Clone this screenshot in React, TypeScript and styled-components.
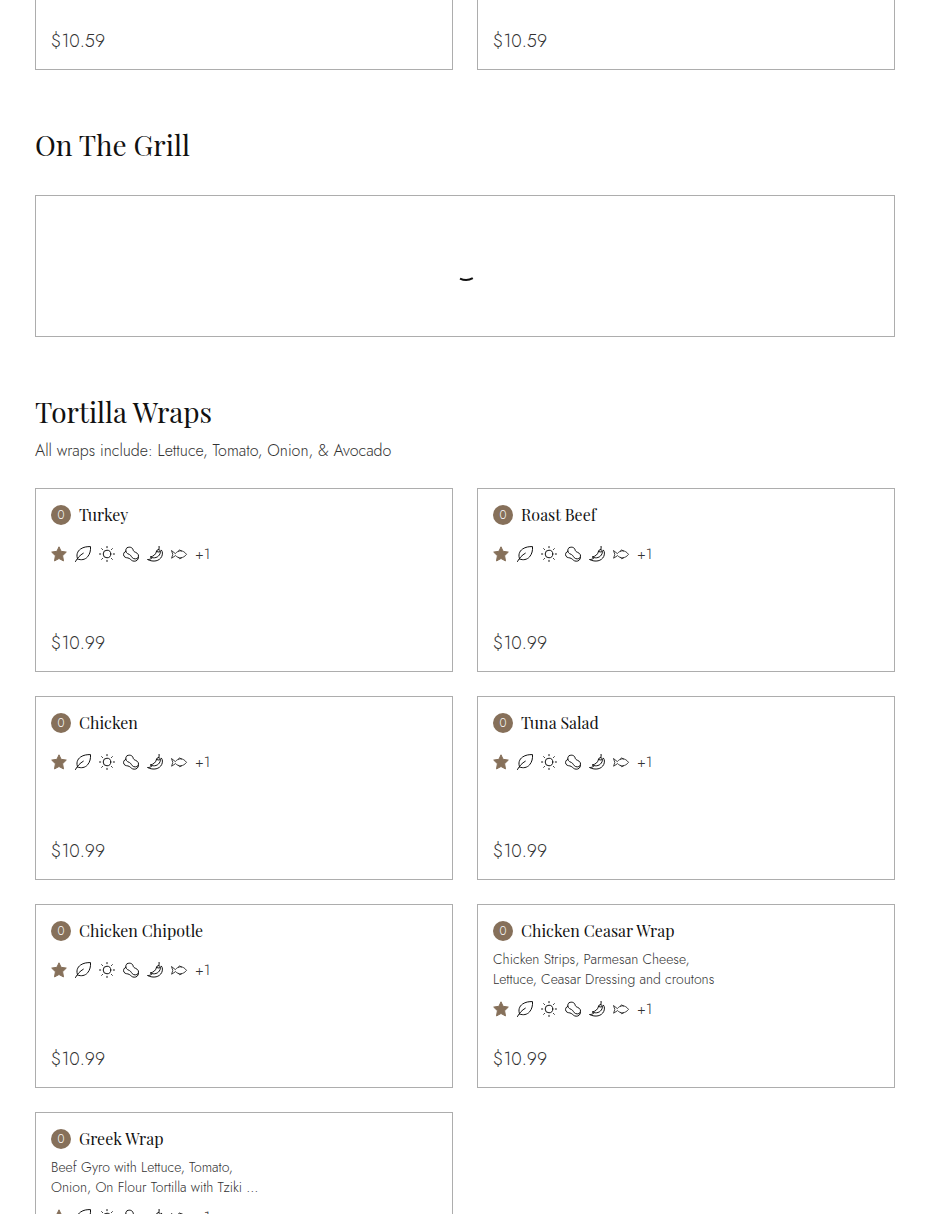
import React from "react";
import styled, { createGlobalStyle } from "styled-components";

const serif = `"Playfair Display", "Liberation Serif", serif`;
const sans = `"Futura PT", Jost, Lato, "Liberation Sans", sans-serif`;

const GlobalStyle = createGlobalStyle`
  *, *::before, *::after { box-sizing: border-box; }
  body {
    margin: 0;
    background: #fff;
    color: #111;
    font-family: ${sans};
    font-weight: 300;
  }
`;

const Page = styled.main`
  padding: 0 35px 40px;
`;

const Section = styled.section`
  padding-top: 56px;
`;

const Heading = styled.h2`
  margin: 0;
  font-family: ${serif};
  font-size: 28px;
  font-weight: 400;
  line-height: 38px;
  color: #111;
`;

const Intro = styled.p`
  margin: 8px 0 0;
  font-size: 16px;
  line-height: 24px;
  color: #333;
`;

const Grid = styled.div<{ $top?: number }>`
  display: grid;
  grid-template-columns: repeat(2, minmax(0, 1fr));
  gap: 24px;
  margin-top: ${({ $top = 0 }) => $top}px;
`;

const Card = styled.article`
  display: flex;
  flex-direction: column;
  min-height: 184px;
  padding: 15px;
  border: 1px solid #adadad;
`;

const CardEnd = styled(Card)`
  min-height: 70px;
  border-top: 0;
`;

const CardHeader = styled.header`
  display: flex;
  align-items: center;
  gap: 8px;
  height: 22px;
`;

const Badge = styled.span`
  display: flex;
  align-items: center;
  justify-content: center;
  width: 20px;
  height: 20px;
  border-radius: 50%;
  background: #86705a;
  color: #fff;
  font-size: 12px;
  line-height: 20px;
`;

const ItemName = styled.h3`
  margin: 0;
  font-family: ${serif};
  font-size: 16px;
  font-weight: 400;
  line-height: 22px;
  color: #111;
`;

const Description = styled.p`
  width: 240px;
  margin: 7px 0 -8px;
  font-size: 14px;
  line-height: 20px;
  color: #333;
  white-space: pre-line;
`;

const Tags = styled.div`
  display: flex;
  align-items: center;
  gap: 8px;
  height: 16px;
  margin-top: 20px;
  font-size: 15px;
  line-height: 16px;
  color: #333;

  svg {
    flex: none;
    width: 16px;
    height: 16px;
    overflow: visible;
  }
`;

const Price = styled.p`
  margin: auto 0 0;
  padding-bottom: 2px;
  font-size: 18px;
  line-height: 22px;
  color: #333;
`;

const LoadingBox = styled.div`
  display: flex;
  align-items: center;
  justify-content: center;
  height: 142px;
  margin-top: 31px;
  border: 1px solid #adadad;
`;

const Line = styled.svg<{ $weight?: number }>`
  fill: none;
  stroke: #111;
  stroke-width: ${({ $weight = 1 }) => $weight};
  stroke-linecap: round;
  stroke-linejoin: round;
`;

const StarIcon = () => (
  <svg viewBox="0 0 16 16" aria-hidden="true">
    <path
      d="M8 .8l2.100 4.500 5.200.8-3.700 3.600.9 5.200L8 12.500l-4.500 2.400.9-5.200L.7 6.100l5.200-.8z"
      fill="#86705a"
      stroke="#86705a"
      strokeLinejoin="round"
    />
  </svg>
);

const LeafIcon = () => (
  <Line viewBox="0 0 16 16" aria-hidden="true">
    <path d="M2.700 13C.9 9.300 2.300 5.200 5.600 3 8.500 1 12 .5 15.500 .6c.3 3.600-.5 7.400-2.900 10.200-2.500 2.900-6.400 3.700-9.900 2.200z" />
    <path d="M.5 15.500c1.700-3.400 4.400-6.300 7.800-8.300" />
  </Line>
);

const SunIcon = () => (
  <Line viewBox="0 0 16 16" aria-hidden="true">
    <circle cx="8" cy="8" r="3.800" />
    <path d="M8 .5v1.200M8 14.300v1.200M.5 8h1.200M14.300 8h1.200M2.700 2.700l.8.8M12.500 12.500l.8.8M13.300 2.700l-.8.8M3.500 12.500l-.8.8" />
  </Line>
);

const PeanutIcon = () => (
  <Line viewBox="0 0 16 16" aria-hidden="true">
    <path d="M4.200 1.700C6.400.4 9.500 1.300 10.100 3.800c.3 1.500 1.200 2 2.600 2.600 2.500 1 3.500 3.300 2.400 5.100-1.200 1.800-4.200 1.900-5.900.1-1.100-1.200-1.300-2.400-2.800-3.100C4.900 7.800 4 7.500 3.300 6.400 2.300 4.700 2.600 2.700 4.200 1.700z" />
    <path d="M2.900 5.300C.8 5.800-.1 8.300 1 10.200c1.200 1.900 3.600 1.300 5.200 2.200 1.700 1 2.500 2.700 5 2.800 2.200.1 4.100-1.300 4.300-3.700" />
  </Line>
);

const ChiliIcon = () => (
  <Line viewBox="0 0 16 16" aria-hidden="true">
    <path d="M12.100 .4c.2 1.300.1 2.200-.4 3.300" />
    <path d="M9.600 5.200c.2-1.500 2.100-2.100 3.200-1.100.8.8.8 2.300.2 3.700-1.600 3.600-5.600 5.100-9.900 3.200 3.300-.6 5.900-2.500 6.500-5.800z" />
    <path d="M9.800 5.400l1.300.6 1.800-.3" />
    <path d="M14.500 4.200c1.300 1.500 1.200 4.200.2 6.300-2.100 4.500-8.200 6-14.200 3 1.700.1 3-.3 4.100-1.200" />
  </Line>
);

const FishIcon = () => (
  <Line viewBox="0 0 16 16" aria-hidden="true" $weight={0.8}>
    <path d="M4.600 7.300C7 4 12.300 3.600 15.500 8.400c-3.200 4.300-8.300 4.200-10.900 1.200L.6 12.200l1.200-3.800L.6 4.900z" />
    <path d="M7.300 5.200l1.200-1.200 2 .9M7.500 11.600l1.200 1.200 1.700-.8" />
  </Line>
);

const Spinner = () => (
  <svg width="32" height="32" viewBox="0 0 32 32" role="img" aria-label="Loading">
    <path
      d="M11 28.600c4.200 2 9 1.800 12.800-.4"
      fill="none"
      stroke="#111"
      strokeWidth="2"
    />
  </svg>
);

type Item = { name: string; description?: string; price: string };

const wraps: Item[] = [
  { name: "Turkey", price: "$10.99" },
  { name: "Roast Beef", price: "$10.99" },
  { name: "Chicken", price: "$10.99" },
  { name: "Tuna Salad", price: "$10.99" },
  { name: "Chicken Chipotle", price: "$10.99" },
  {
    name: "Chicken Ceasar Wrap",
    description: "Chicken Strips, Parmesan Cheese,\nLettuce, Ceasar Dressing and croutons",
    price: "$10.99",
  },
  {
    name: "Greek Wrap",
    description: "Beef Gyro with Lettuce, Tomato,\nOnion, On Flour Tortilla with Tziki …",
    price: "$10.99",
  },
];

const MenuCard = ({ name, description, price }: Item) => (
  <Card>
    <CardHeader>
      <Badge>0</Badge>
      <ItemName>{name}</ItemName>
    </CardHeader>
    {description && <Description>{description}</Description>}
    <Tags>
      <StarIcon />
      <LeafIcon />
      <SunIcon />
      <PeanutIcon />
      <ChiliIcon />
      <FishIcon />
      <span>+1</span>
    </Tags>
    <Price>{price}</Price>
  </Card>
);

export default function App() {
  return (
    <>
      <GlobalStyle />
      <Page>
        <Grid>
          <CardEnd>
            <Price>$10.59</Price>
          </CardEnd>
          <CardEnd>
            <Price>$10.59</Price>
          </CardEnd>
        </Grid>
        <Section>
          <Heading>On The Grill</Heading>
          <LoadingBox>
            <Spinner />
          </LoadingBox>
        </Section>
        <Section>
          <Heading>Tortilla Wraps</Heading>
          <Intro>All wraps include: Lettuce, Tomato, Onion, &amp; Avocado</Intro>
          <Grid $top={25}>
            {wraps.map((item) => (
              <MenuCard key={item.name} {...item} />
            ))}
          </Grid>
        </Section>
      </Page>
    </>
  );
}
